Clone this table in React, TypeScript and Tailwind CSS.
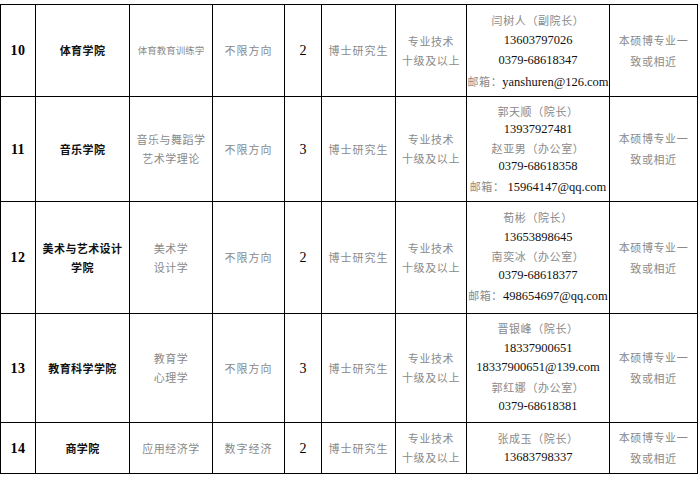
type Line = { t: string; k?: 'zh' | 'lat' | 'mix'; pre?: string }

type Row = {
  no: string
  college: string[]
  major: string[]
  dir: string
  count: string
  edu: string
  title: string[]
  contact: Line[]
  req: string[]
  h: string
  lh: string
}

const rows: Row[] = [
  {
    no: '10',
    college: ['体育学院'],
    major: ['体育教育训练学'],
    dir: '不限方向',
    count: '2',
    edu: '博士研究生',
    title: ['专业技术', '十级及以上'],
    contact: [
      { t: '闫树人（副院长）', k: 'zh' },
      { t: '13603797026', k: 'lat' },
      { t: '0379-68618347', k: 'lat' },
      { t: 'yanshuren@126.com', k: 'mix', pre: '邮箱：' },
    ],
    req: ['本硕博专业一', '致或相近'],
    h: 'h-[92px]',
    lh: 'leading-[20px]',
  },
  {
    no: '11',
    college: ['音乐学院'],
    major: ['音乐与舞蹈学', '艺术学理论'],
    dir: '不限方向',
    count: '3',
    edu: '博士研究生',
    title: ['专业技术', '十级及以上'],
    contact: [
      { t: '郭天顺（院长）', k: 'zh' },
      { t: '13937927481', k: 'lat' },
      { t: '赵亚男（办公室）', k: 'zh' },
      { t: '0379-68618358', k: 'lat' },
      { t: '15964147@qq.com', k: 'mix', pre: '邮箱： ' },
    ],
    req: ['本硕博专业一', '致或相近'],
    h: 'h-[105px]',
    lh: 'leading-[18.5px]',
  },
  {
    no: '12',
    college: ['美术与艺术设计', '学院'],
    major: ['美术学', '设计学'],
    dir: '不限方向',
    count: '2',
    edu: '博士研究生',
    title: ['专业技术', '十级及以上'],
    contact: [
      { t: '荀彬（院长）', k: 'zh' },
      { t: '13653898645', k: 'lat' },
      { t: '南奕冰（办公室）', k: 'zh' },
      { t: '0379-68618377', k: 'lat' },
      { t: '498654697@qq.com', k: 'mix', pre: '邮箱：' },
    ],
    req: ['本硕博专业一', '致或相近'],
    h: 'h-[112px]',
    lh: 'leading-[19.3px]',
  },
  {
    no: '13',
    college: ['教育科学学院'],
    major: ['教育学', '心理学'],
    dir: '不限方向',
    count: '3',
    edu: '博士研究生',
    title: ['专业技术', '十级及以上'],
    contact: [
      { t: '晋银峰（院长）', k: 'zh' },
      { t: '18337900651', k: 'lat' },
      { t: '18337900651@139.com', k: 'lat' },
      { t: '郭红娜（办公室）', k: 'zh' },
      { t: '0379-68618381', k: 'lat' },
    ],
    req: ['本硕博专业一', '致或相近'],
    h: 'h-[109px]',
    lh: 'leading-[19.5px]',
  },
  {
    no: '14',
    college: ['商学院'],
    major: ['应用经济学'],
    dir: '数字经济',
    count: '2',
    edu: '博士研究生',
    title: ['专业技术', '十级及以上'],
    contact: [
      { t: '张成玉（院长）', k: 'zh' },
      { t: '13683798337', k: 'lat' },
    ],
    req: ['本硕博专业一', '致或相近'],
    h: 'h-[51px]',
    lh: 'leading-[19px]',
  },
]

const serif = "font-['Liberation_Serif','Noto_Sans_CJK_SC',serif]"
const zh = "font-['Noto_Sans_CJK_SC',sans-serif] text-[11px] text-[#8a8a8a] tracking-[0.6px]"
const cell = 'border border-black p-0 text-center align-middle'

function Lines({ items, lh }: { items: string[]; lh: string }) {
  return (
    <div className={`${zh} ${lh}`}>
      {items.map(s => (
        <div key={s}>{s}</div>
      ))}
    </div>
  )
}

export default function App() {
  return (
    <div className="w-[700px] h-[477px] bg-white pt-[4px] overflow-hidden">
      <table className="table-fixed border-collapse w-[698px]">
        <colgroup>
          <col className="w-[35px]" />
          <col className="w-[94px]" />
          <col className="w-[83px]" />
          <col className="w-[72px]" />
          <col className="w-[37px]" />
          <col className="w-[74px]" />
          <col className="w-[71px]" />
          <col className="w-[143px]" />
          <col className="w-[88px]" />
        </colgroup>
        <tbody>
          {rows.map(r => (
            <tr key={r.no} className={r.h}>
              <td className={`${cell} ${serif} font-bold text-[14px] tracking-[0.5px] text-black`}>{r.no}</td>
              <td className={cell}>
                <div className="font-['Noto_Sans_CJK_SC',sans-serif] font-bold text-[11px] leading-[19px] tracking-[0.4px] text-[#111]">
                  {r.college.map(s => (
                    <div key={s}>{s}</div>
                  ))}
                </div>
              </td>
              <td className={cell}>
                <div className={`font-['Noto_Sans_CJK_SC',sans-serif] text-[#8a8a8a] leading-[19px] ${r.major[0].length > 6 ? 'text-[9.5px]' : 'text-[11px] tracking-[0.5px]'}`}>
                  {r.major.map(s => (
                    <div key={s}>{s}</div>
                  ))}
                </div>
              </td>
              <td className={cell}>
                <div className={`${zh} tracking-[1px]`}>{r.dir}</div>
              </td>
              <td className={`${cell} ${serif} text-[14px] text-black`}>{r.count}</td>
              <td className={cell}>
                <div className={`${zh} tracking-[1px]`}>{r.edu}</div>
              </td>
              <td className={cell}>
                <Lines items={r.title} lh="leading-[19px]" />
              </td>
              <td className={cell}>
                <div className={r.lh}>
                  {r.contact.map(l =>
                    l.k === 'zh' ? (
                      <div key={l.t} className={zh}>{l.t}</div>
                    ) : l.k === 'lat' ? (
                      <div key={l.t} className={`${serif} text-[12.5px] text-[#111]`}>{l.t}</div>
                    ) : (
                      <div key={l.t} className="whitespace-nowrap">
                        <span className={zh}>{l.pre}</span>
                        <span className={`${serif} text-[12.5px] text-[#111]`}>{l.t}</span>
                      </div>
                    )
                  )}
                </div>
              </td>
              <td className={cell}>
                <Lines items={r.req} lh="leading-[21px]" />
              </td>
            </tr>
          ))}
        </tbody>
      </table>
    </div>
  )
}
